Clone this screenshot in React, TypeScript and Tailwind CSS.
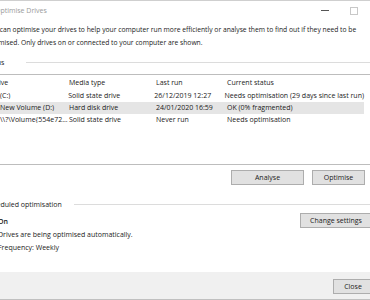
import React from "react";

const rows = [
  { name: "(C:)", media: "Solid state drive", last: "26/12/2019 12:27", status: "Needs optimisation (29 days since last run)", selected: false },
  { name: "New Volume (D:)", media: "Hard disk drive", last: "24/01/2020 16:59", status: "OK (0% fragmented)", selected: true },
  { name: "\\\\?\\Volume{554e72...", media: "Solid state drive", last: "Never run", status: "Needs optimisation", selected: false },
];

const Btn = ({ label, className }: { label: string; className: string }) => (
  <div
    className={`flex items-center justify-center bg-[#e1e1e1] border border-[#adadad] text-[#1a1a1a] ${className}`}
  >
    {label}
  </div>
);

export default function App() {
  return (
    <div
      className="w-[370px] h-[300px] overflow-hidden bg-white text-[7px] text-[#1a1a1a] leading-none"
      style={{ fontFamily: '"Open Sans", "Noto Sans", sans-serif' }}
    >
      <div className="h-px bg-[#cfcfcf]" />
      {/* title bar */}
      <div className="h-[19px] flex items-center">
        <span className="-ml-[5px] text-[#9a9a9a]">Optimise Drives</span>
        <div className="flex-1" />
        <div className="w-[8px] h-px bg-[#555] mr-[21px]" />
        <div className="w-[8px] h-[8px] border border-[#c8c8c8] mr-[12px]" />
      </div>

      {/* description */}
      <div className="-ml-[14px] mt-[7px] flex flex-col gap-[6px] text-[6.75px]">
        <span className="whitespace-nowrap">
          You can optimise your drives to help your computer run more efficiently or analyse them to find out if they need to be
        </span>
        <span className="whitespace-nowrap">
          optimised. Only drives on or connected to your computer are shown.
        </span>
      </div>

      {/* status group */}
      <div className="mt-[12px] flex items-center -ml-[16px]">
        <span>Status</span>
        <div className="flex-1 h-px bg-[#dcdcdc] ml-[22px]" />
      </div>

      <div className="mt-[8px] border-t border-b border-[#bdbdbd] h-[91px] w-[380px]">
        <div className="flex h-[15px] items-center">
          <span className="w-[69px] -ml-[9px]">
            <span className="inline-block w-[78px]">Drive</span>
          </span>
          <span className="w-[87px] ml-[9px]">Media type</span>
          <span className="w-[71px]">Last run</span>
          <span>Current status</span>
        </div>
        {rows.map((r) => (
          <div
            key={r.name}
            className={`flex h-[12px] items-center w-[364px] ${r.selected ? "bg-[#e5e5e5]" : ""}`}
          >
            <span className="w-[69px] whitespace-nowrap overflow-hidden">{r.name}</span>
            <span className="w-[87px]">{r.media}</span>
            <span className="w-[71px]">{r.last}</span>
            <span className="whitespace-nowrap">{r.status}</span>
          </div>
        ))}
      </div>

      <div className="flex justify-end gap-[8px] mt-[5px] pr-[5px]">
        <Btn label="Analyse" className="w-[73px] h-[15px]" />
        <Btn label="Optimise" className="w-[53px] h-[15px]" />
      </div>

      {/* scheduled */}
      <div className="mt-[16px] flex items-center -ml-[15px]">
        <span>Scheduled optimisation</span>
        <div className="flex-1 h-px bg-[#dcdcdc] ml-[12px]" />
      </div>

      <div className="flex mt-[6px]">
        <div className="flex flex-col -ml-[2px] pt-[4px] gap-[6px]">
          <span className="font-semibold">On</span>
          <span>Drives are being optimised automatically.</span>
          <span>Frequency: Weekly</span>
        </div>
        <div className="flex-1" />
        <Btn label="Change settings" className="w-[72px] h-[15px] mr-[-2px] -mt-[1px]" />
      </div>

      <div className="mt-[21px] h-[28px] bg-[#f0f0f0] border-b border-[#c0c0c0] flex items-center justify-end">
        <Btn label="Close" className="w-[40px] h-[15px] mr-[-3px] mt-[2px]" />
      </div>
    </div>
  );
}
